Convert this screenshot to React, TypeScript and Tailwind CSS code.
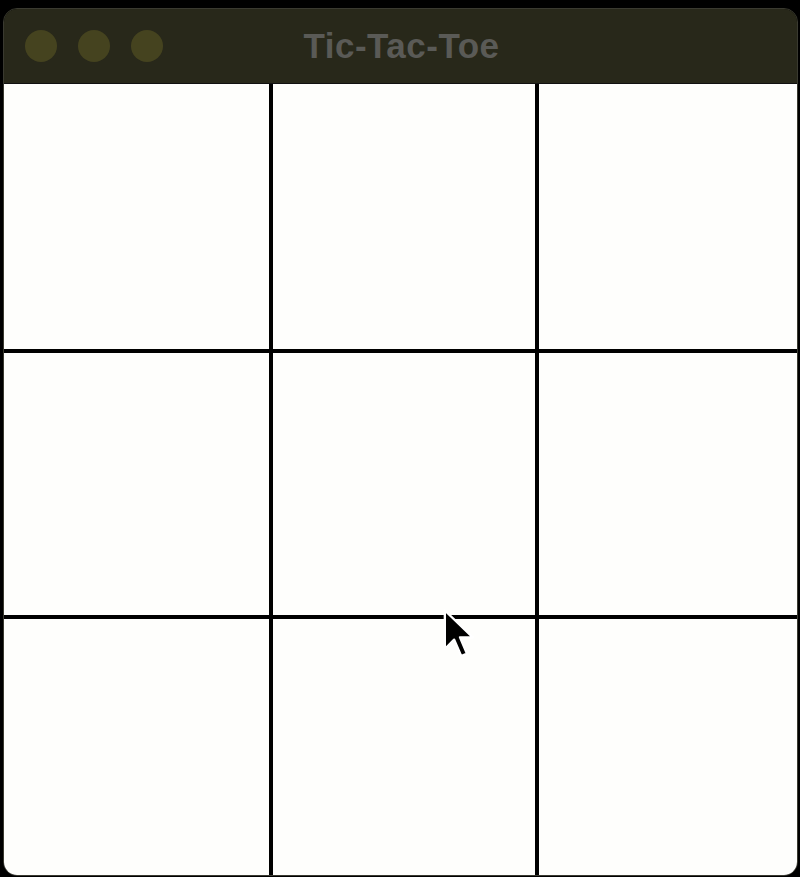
import React from 'react'

const cells = Array.from({ length: 9 }, (_, i) => i)

const App = () => {
  return (
    <div className="w-[800px] h-[877px] bg-black pt-[8px] pl-[3px] relative">
      <div className="w-[795px] h-[868px] rounded-[14px] overflow-hidden flex flex-col border border-[#3a3a30] bg-black">
        {/* Title bar */}
        <div className="h-[75px] bg-[#28281a] flex items-center relative border-b border-[#111]">
          <div className="flex gap-[21px] pl-[21px]">
            <div className="w-[32px] h-[32px] rounded-full bg-[#45431f]" />
            <div className="w-[32px] h-[32px] rounded-full bg-[#45431f]" />
            <div className="w-[32px] h-[32px] rounded-full bg-[#45431f]" />
          </div>
          <div className="absolute inset-0 flex items-center justify-center pl-[2px]">
            <span className="text-[35px] font-bold text-[#5a5a56] tracking-[0.5px]" style={{ fontFamily: '"Liberation Sans", Arial, sans-serif' }}>
              Tic-Tac-Toe
            </span>
          </div>
        </div>

        {/* Board */}
        <div className="flex-1 grid grid-cols-[265px_262px_258px] grid-rows-[265px_262px_1fr] gap-[4px] bg-black">
          {cells.map((c) => (
            <div key={c} className="bg-[#fefefc]" />
          ))}
        </div>
      </div>

      {/* cursor */}
      <svg className="absolute left-[440px] top-[607px]" width="40" height="56" viewBox="0 0 34 48">
        <path
          d="M4 3 L4 36 L12 28 L18 42 L23 40 L17 26 L28 26 Z"
          fill="#000"
          stroke="#fff"
          strokeWidth="2"
          strokeLinejoin="round"
        />
      </svg>
    </div>
  )
}

export default App
